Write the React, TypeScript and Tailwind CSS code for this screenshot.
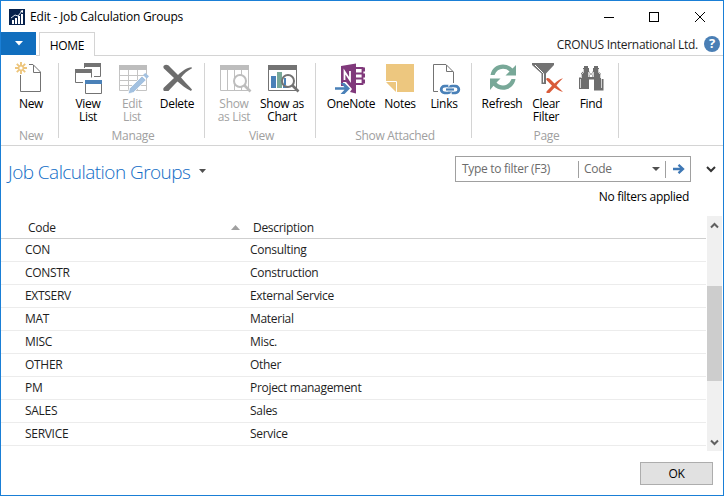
import type { ReactNode } from "react";

const GRAY = "#737373";
const BLUE = "#4a81b8";

function Icon({ cx, children }: { cx: number; children: ReactNode }) {
  return (
    <svg width="32" height="34" viewBox={`${cx - 16} 60 32 34`} className="shrink-0 overflow-visible" fill="none">
      {children}
    </svg>
  );
}

const NewIcon = (
  <Icon cx={31}>
    <path d="M20.5 75V91.5H40.5V72L33 64.5H29M33.5 65V72.5H40.5" stroke={GRAY} />
    <path d="M21 62v12M15 68h12M16.8 63.8l8.4 8.4M25.2 63.8l-8.4 8.4" stroke="#edc57c" strokeWidth="1.9" />
    <circle cx="21" cy="68" r="2.9" fill="#edc57c" />
    <circle cx="21" cy="68" r="1.6" fill="#fff" />
  </Icon>
);

const ViewListIcon = (
  <Icon cx={88}>
    <path d="M84.5 68V63.500H100.500V76.500H94" stroke={GRAY} />
    <path d="M84 63h17v4H84z" fill={GRAY} />
    <path d="M75.500 69.500h16v8M75.500 69.500v13h7.500" stroke={GRAY} />
    <path d="M75 69h17v4H75z" fill={GRAY} />
    <path d="M85.500 80.500h16v13h-16z" fill="#fff" stroke={GRAY} />
    <path d="M85 80h17v4H85z" fill={BLUE} />
  </Icon>
);

const EditListIcon = (
  <Icon cx={132}>
    <path d="M119.500 65.500h27v25h-27zM120 75.500h26M120 80.500h26M120 85.500h26M128.500 70v20M137.500 70v20" stroke="#c4c4c4" />
    <path d="M119 65h28v5h-28z" fill="#bdbdbd" />
    <path d="M128 94l1.500-5.500 12.500-12.500 4.200 4-12.700 12.500z" fill="#a3c1e0" stroke="#fff" strokeWidth=".8" />
    <path d="M143 75l2.300-2.100 3.700 3.300-2.200 2.500z" fill="#a3c1e0" />
  </Icon>
);

const DeleteIcon = (
  <Icon cx={177}>
    <path d="M164 65.500C166 64 168.500 65 170 67L178 75C182 71 187 67.500 191.500 67.200L192 68.300C187.500 70.500 184 74 181 77.500C184 81 188 85 192 89.500L191 91C186 88.500 181.500 85 177.500 81.500C174 85 171 88 168.500 91H164C163 90 163 88.500 164 87.500L174 78L165 69.500C163 68 163 66.500 164 65.500Z" fill="#6d6d6d" />
  </Icon>
);

const ShowListIcon = (
  <Icon cx={234}>
    <path d="M220.500 65.500h28v25h-28zM227.500 70v20M234.500 70v20M241.500 70v20" stroke="#c0c0c0" />
    <path d="M220 65h29v5h-29z" fill="#bdbdbd" />
    <circle cx="240" cy="81" r="6" fill="#fff" stroke="#bdbdbd" strokeWidth="2" />
    <path d="M244.500 85.500l6 6" stroke="#bdbdbd" strokeWidth="2.600" />
  </Icon>
);

const ShowChartIcon = (
  <Icon cx={282}>
    <path d="M268.500 65.500h28v25h-28z" stroke={GRAY} />
    <path d="M268 65h29v5h-29z" fill={GRAY} />
    <path d="M271 76h5v12h-5z" fill={BLUE} />
    <path d="M277 72h5v16h-5z" fill="#78a898" />
    <path d="M283 78h5v10h-5z" fill={BLUE} />
    <circle cx="288" cy="81" r="6" fill="#fff" stroke={GRAY} strokeWidth="2" />
    <path d="M284 78h2v7h-2z" fill={BLUE} />
    <path d="M292.500 85.500l6 6" stroke={GRAY} strokeWidth="2.600" />
  </Icon>
);

const OneNoteIcon = (
  <Icon cx={351}>
    <path d="M355 68h7.500v16H355M356 73.500h6M356 78.500h6" stroke="#80397b" strokeWidth="1.800" />
    <path d="M364 67.500v4M364 73.500v4M364 79.500v4" stroke="#80397b" strokeWidth="2" />
    <path d="M341 66l15-2.500V93.500L350 92l2-3-6-7h-3l1 4h-3z" fill="#80397b" />
    <path d="M344.500 80V71.500L350 80V71" stroke="#fff" strokeWidth="1.800" />
    <path d="M335 87.200h9.500l-4-4.200h4l5.500 5.500-5.500 5.500h-4l4-4.200h-9.500z" fill={BLUE} />
  </Icon>
);

const NotesIcon = (
  <Icon cx={400}>
    <path d="M386 64h28v28h-28z" fill="#edc77f" />
    <path d="M386 81.500h10.500V92" stroke="#fff" />
    <path d="M386 82l10 10h-10z" fill="#fff" />
    <path d="M387 82.500h8.500v8.500z" fill="#edc77f" />
  </Icon>
);

const LinksIcon = (
  <Icon cx={444}>
    <path d="M438 91.500H433.500V64.500H446L453.500 72V83M446.500 65V71.500H453" stroke={GRAY} />
    <rect x="441.200" y="86.200" width="10" height="6.600" rx="3.300" stroke={BLUE} strokeWidth="2.800" />
    <rect x="448.800" y="86.200" width="10" height="6.600" rx="3.300" stroke={BLUE} strokeWidth="2.800" />
    <path d="M445.500 89.500h9" stroke="#fff" strokeWidth="4" />
    <path d="M446 89.500h8" stroke={BLUE} strokeWidth="2.200" />
    <path d="M449.500 84.500l-1 2M451.500 92.500l-1 2" stroke="#fff" strokeWidth="1.300" />
  </Icon>
);

const RefreshIcon = (
  <Icon cx={502}>
    <path d="M490.500 75C491.500 68.500 497 64.500 503 64.500C506.500 64.500 510 66 512.500 68.500L516 65V75.500H505.500L509.500 71.500C507.500 69.500 505.500 68.800 503 68.800C499 68.800 496.300 71 494.500 75Z" fill="#78a898" />
    <path d="M515.500 79C514.500 85.500 509 89.800 503 89.800C499.500 89.800 496 88.300 493.500 85.800L490 90V78.500H500.500L496.500 82.500C498.500 84.700 500.500 85.400 503 85.400C507 85.400 509.700 83.200 511.500 79Z" fill="#78a898" />
  </Icon>
);

const ClearFilterIcon = (
  <Icon cx={546}>
    <path d="M532 63h22v2l-8 8.500v10.500h-4.500V73.500L532 65z" fill={GRAY} />
    <path d="M535 65l8.500 8.500V82.500" stroke="#fff" />
    <path d="M546.500 78.500C548 77.500 549.500 78.500 551 80L554.500 83.500C557 81 560 79 563 78.200C560.500 80.500 558.500 82.800 556.500 85.500L563 92C560 91.200 557 89.500 554.500 87.700L549.500 93H546.500V91.500L552 85.700L547 80.500C546 79.500 546 79 546.500 78.500Z" fill="#d95b3a" />
  </Icon>
);

const FindIcon = (
  <Icon cx={591}>
    <path d="M584 66h4v2h1v3l.5 1v5h3v-5l.5-1v-3h1v-2h4v2h1v4l2 2v5h2.500v11.500h-9.500V79.500h-5v9.500h-10V77.500h2v-4l2-2V68h1z" fill="#6d6d6d" />
    <path d="M583.500 69v3.500l-2 2V78M580.500 79v9M598.500 69v3.500l2 2V78M601.500 79v9M591 68v4M588.500 72v5M593.500 72v5" stroke="#fff" strokeWidth=".7" />
    <path d="M589.500 73h3v2h-3z" fill="#fff" />
    <path d="M590.500 73h1v2h-1z" fill="#6d6d6d" />
  </Icon>
);

type Cmd = { icon: ReactNode; lines: string[]; width: string; off?: boolean };

function Group({ label, pad, width, items }: { label: string; pad: string; width: string; items: Cmd[] }) {
  return (
    <div className={`relative flex h-[89px] shrink-0 flex-col ${width}`}>
      <div className={`flex h-[71px] pt-1 ${pad}`}>
        {items.map((c) => (
          <button key={c.lines.join()} className={`flex shrink-0 flex-col items-center ${c.width} ${c.off ? "text-[#a3a3a3]" : "text-black"}`}>
            {c.icon}
            <span className="mt-[3px] block text-center leading-[13px] whitespace-pre">{c.lines.join("\n")}</span>
          </button>
        ))}
      </div>
      <div className="pt-px pl-[2px] text-center leading-4 text-[#a0a0a0]">{label}</div>
      <div className="absolute top-[7px] right-0 h-[75px] w-px bg-[#d4d4d4]" />
    </div>
  );
}

const rows = [
  ["CON", "Consulting"],
  ["CONSTR", "Construction"],
  ["EXTSERV", "External Service"],
  ["MAT", "Material"],
  ["MISC", "Misc."],
  ["OTHER", "Other"],
  ["PM", "Project management"],
  ["SALES", "Sales"],
  ["SERVICE", "Service"],
];

export default function App() {
  return (
    <div className="flex h-[496px] w-[724px] flex-col overflow-hidden border border-[#1a7fd6] bg-white font-['Open_Sans','Noto_Sans',sans-serif] text-[12px] tracking-[-0.3px] text-[#1e1e1e]">
      <header className="flex h-[31px] shrink-0 items-center pl-2">
        <svg width="16" height="16" viewBox="0 0 16 16" className="shrink-0">
          <path d="M0 0h16v16H0z" fill="#06214c" />
          <path d="M3 11h2v4H3zM6 9h2v6H6zM9 7h2v8H9zM12 5h2v10h-2z" fill="#fff" />
          <path d="M2 9l4-3 3 1 4-5" stroke="#dce3ec" fill="none" />
          <path d="M11 2l3-1v3z" fill="#fff" />
        </svg>
        <h1 className="ml-[5px] tracking-[-0.19px] text-black">Edit - Job Calculation Groups</h1>
        <svg width="110" height="12" viewBox="600 9 110 12" className="mr-[13px] ml-auto" fill="none" stroke="#000" shapeRendering="crispEdges">
          <path d="M604 15.500h10M649.500 10.500h9v9h-9z" />
          <path d="M695 10l10 10M705 10l-10 10" shapeRendering="auto" />
        </svg>
      </header>

      <nav className="flex h-[24px] shrink-0">
        <div className="flex h-[23px] w-[35px] items-center justify-center bg-[#106ebe]">
          <svg width="8" height="5" viewBox="0 0 8 5"><path d="M0 0h8L4 4.500z" fill="#fff" /></svg>
        </div>
        <div className="w-[3px] border-b border-[#d4d4d4]" />
        <div className="flex w-[56px] items-center justify-center border-t border-r border-l border-[#d4d4d4] pt-[3px] text-black">HOME</div>
        <div className="flex flex-1 items-center justify-end gap-[6px] border-b border-[#d4d4d4] pt-[3px] pr-[3px]">
          <span className="tracking-[-0.28px]">CRONUS International Ltd.</span>
          <span className="-mt-[2px] flex size-4 items-center justify-center rounded-full bg-[#4a7fb5] text-[13px] font-bold text-white">?</span>
        </div>
      </nav>

      <section className="flex h-[90px] shrink-0 border-b border-[#d4d4d4]">
        <Group label="New" width="w-[58px]" pad="pl-2" items={[{ icon: NewIcon, lines: ["New"], width: "w-11" }]} />
        <Group
          label="Manage"
          width="w-[146px]"
          pad="pl-[7px]"
          items={[
            { icon: ViewListIcon, lines: ["View", "List"], width: "w-11" },
            { icon: EditListIcon, lines: ["Edit", "List"], width: "w-11", off: true },
            { icon: DeleteIcon, lines: ["Delete"], width: "w-[46px]" },
          ]}
        />
        <Group
          label="View"
          width="w-[111px]"
          pad="pl-[7px]"
          items={[
            { icon: ShowListIcon, lines: ["Show", "as List"], width: "w-11", off: true },
            { icon: ShowChartIcon, lines: ["Show as", "Chart"], width: "w-[52px]" },
          ]}
        />
        <Group
          label="Show Attached"
          width="w-[156px]"
          pad="pl-[10px]"
          items={[
            { icon: OneNoteIcon, lines: ["OneNote"], width: "w-[50px]" },
            { icon: NotesIcon, lines: ["Notes"], width: "w-12" },
            { icon: LinksIcon, lines: ["Links"], width: "w-10" },
          ]}
        />
        <Group
          label="Page"
          width="w-[147px]"
          pad="pl-2"
          items={[
            { icon: RefreshIcon, lines: ["Refresh"], width: "w-11" },
            { icon: ClearFilterIcon, lines: ["Clear", "Filter"], width: "w-11" },
            { icon: FindIcon, lines: ["Find"], width: "w-[46px]" },
          ]}
        />
      </section>

      <section className="flex h-[70px] shrink-0 items-start pl-[7px]">
        <h2 className="mt-[12px] w-[183px] text-[19px] leading-7 font-light tracking-[-0.55px] whitespace-nowrap text-[#0f6cc6]">Job Calculation Groups</h2>
        <svg width="7" height="4" viewBox="0 0 7 4" className="mt-[23px] ml-2"><path d="M0 0h7L3.500 4z" fill="#505050" /></svg>
        <div className="ml-auto flex flex-col items-end">
          <div className="mt-[10px] flex h-[26px] w-[236px] items-center border border-[#a0a0a0] text-[#6b6b6b]">
            <span className="w-[122px] pl-[6px]">Type to filter (F3)</span>
            <span className="h-[17px] w-px bg-[#a0a0a0]" />
            <span className="w-[73px] pl-[5px]">Code</span>
            <svg width="8" height="4" viewBox="0 0 8 4"><path d="M0 0h8L4 4z" fill="#505050" /></svg>
            <span className="ml-[5px] h-[17px] w-px bg-[#a0a0a0]" />
            <svg width="12" height="10" viewBox="0 0 12 10" className="ml-[7px]" fill="none" stroke="#3f78b5" strokeWidth="2.300"><path d="M0 5h10M5.500 .8L10 5 5.500 9.200" /></svg>
          </div>
          <span className="mt-[7px] mr-[2px] leading-4 text-black">No filters applied</span>
        </div>
        <svg width="10" height="7" viewBox="0 0 10 7" className="mt-5 mr-[7px] ml-[15px]" fill="none" stroke="#333" strokeWidth="2"><path d="M1 1l4 4 4-4" /></svg>
      </section>

      <section className="flex h-[235px] shrink-0 justify-between">
        <div className="w-[705px]">
          <div className="flex h-[23px] items-center border-b border-[#cfcfcf] pt-[2px] pl-[27px]">
            <span className="w-[203px]">Code</span>
            <svg width="9" height="5" viewBox="0 0 9 5" className="-mt-[2px]"><path d="M0 5h9L4.500 0z" fill="#a0a0a0" /></svg>
            <span className="ml-[13px]">Description</span>
          </div>
          {rows.map(([code, name]) => (
            <div key={code} className="flex h-[23px] items-center border-b border-[#ececec] pl-6">
              <span className="w-[225px]">{code}</span>
              <span>{name}</span>
            </div>
          ))}
        </div>
        <div className="mr-px flex w-[15px] flex-col items-center bg-[#f0f0f0]">
          <svg width="9" height="7" viewBox="0 0 9 7" className="mt-[6px] mb-[57px]" fill="none" stroke="#606060" strokeWidth="2"><path d="M1 5.500L4.500 2 8 5.500" /></svg>
          <div className="h-[95px] w-full bg-[#cdcdcd]" />
          <svg width="9" height="7" viewBox="0 0 9 7" className="mt-auto mb-[5px]" fill="none" stroke="#606060" strokeWidth="2"><path d="M1 1.500L4.500 5 8 1.500" /></svg>
        </div>
      </section>

      <footer className="flex flex-1 items-start justify-end pt-[11px] pr-[10px]">
        <button className="h-[23px] w-[73px] border border-[#adadad] bg-[#e1e1e1] text-black">OK</button>
      </footer>
    </div>
  );
}
